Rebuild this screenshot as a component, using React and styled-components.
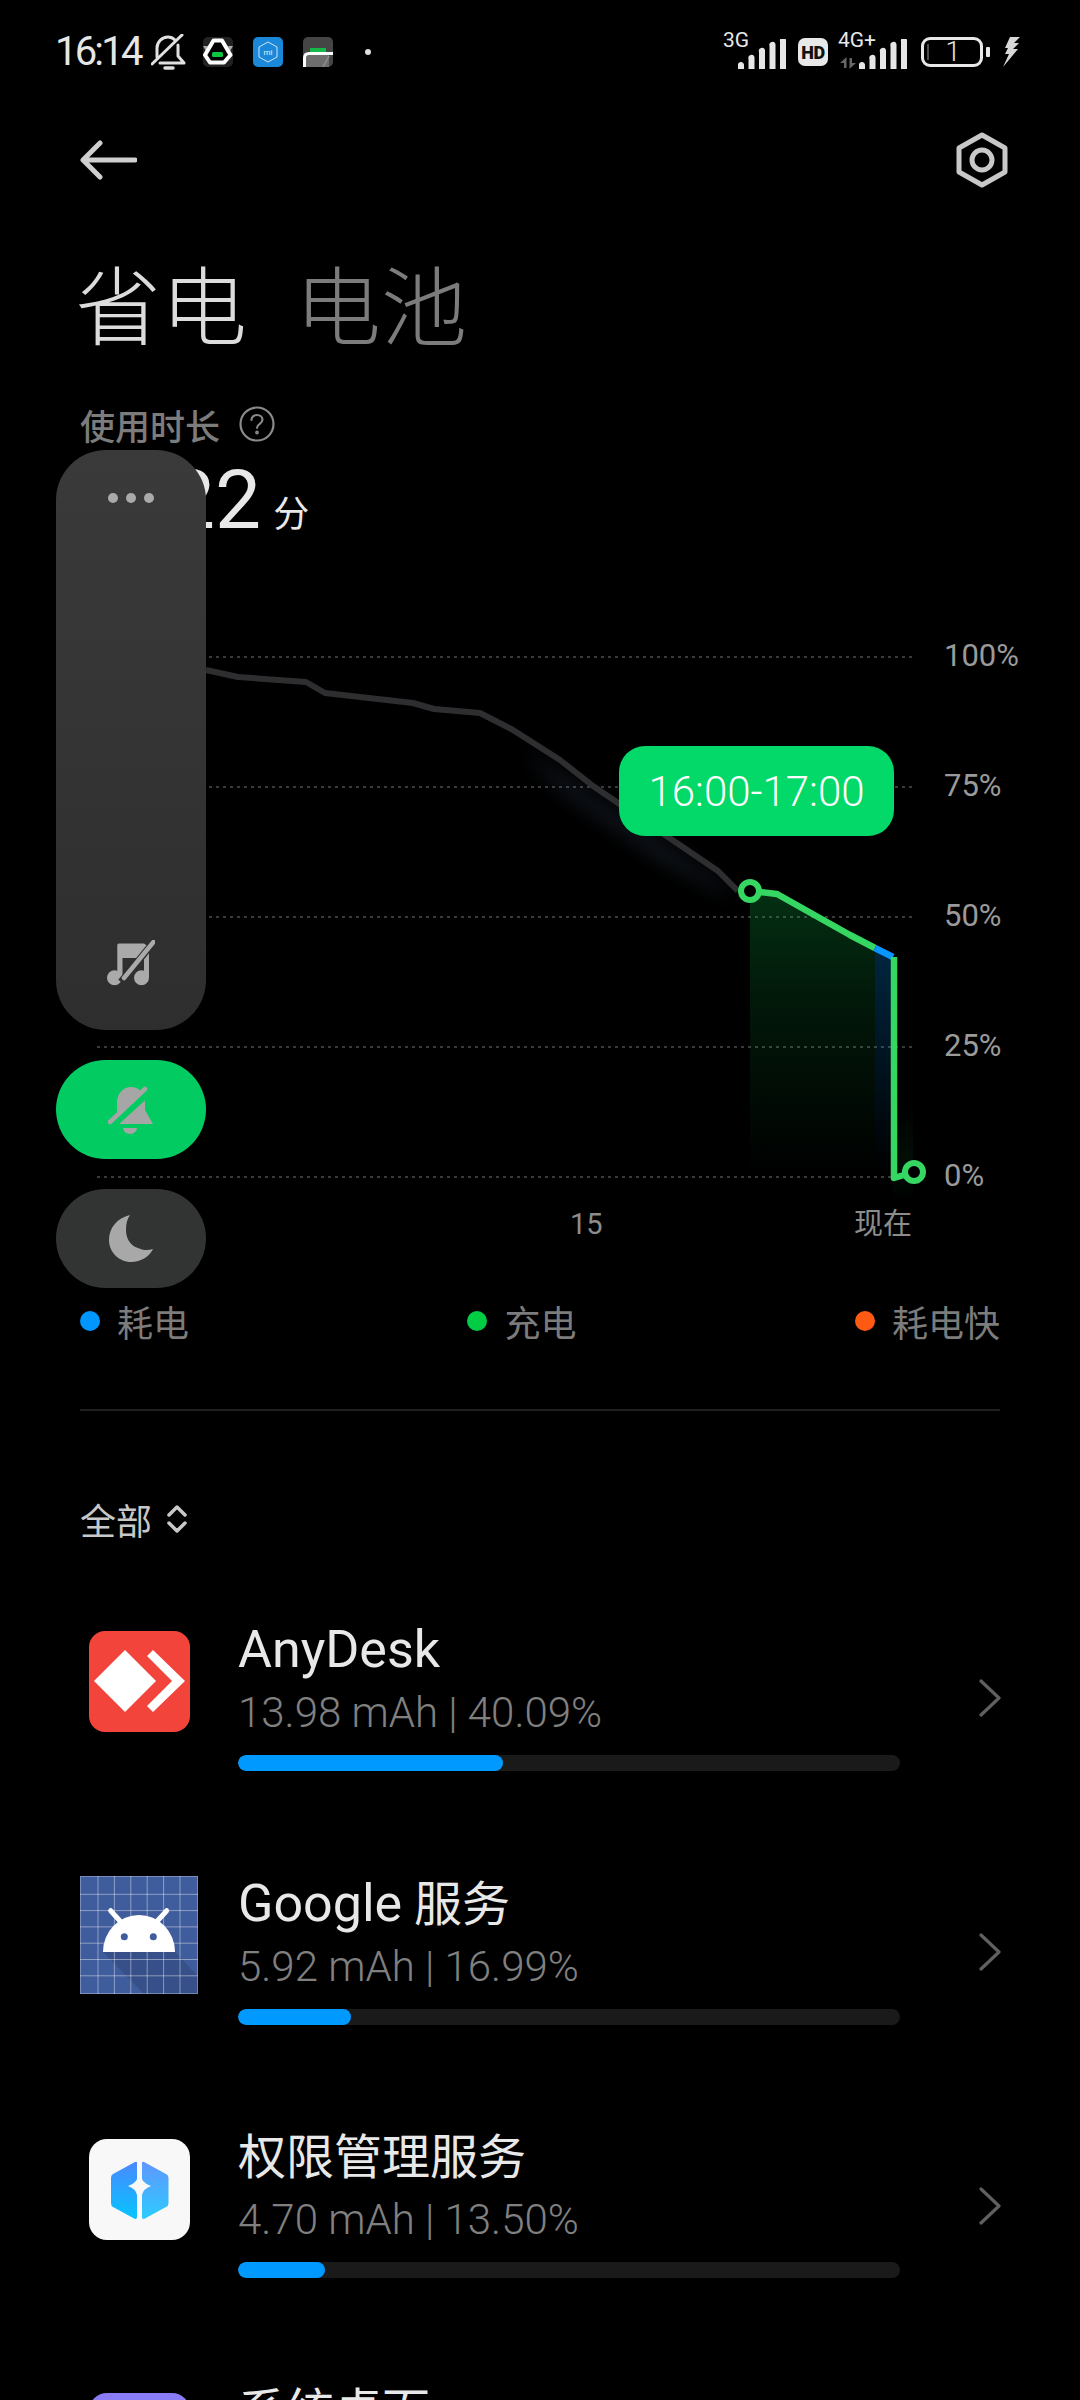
import React from "react";
import styled, { createGlobalStyle } from "styled-components";

const Global = createGlobalStyle`
  html, body { margin: 0; padding: 0; background: #000; }
  * { box-sizing: border-box; }
`;
const FONT = `Roboto, "Noto Sans CJK SC", sans-serif`;

const Page = styled.div`
  position: relative; width: 1080px; height: 2400px; overflow: hidden;
  background: #000; font-family: ${FONT}; color: #e8e8e8;
`;
const StatusBar = styled.header`
  height: 104px; padding: 0 60px 0 55px; display: flex; align-items: center; justify-content: space-between;
`;
const StatusGroup = styled.div`display: flex; align-items: center;`;
const Time = styled.span`
  width: 87px; font-size: 40px; line-height: 44px; letter-spacing: -2.8px; color: #e6e6e6; white-space: nowrap;
`;
const StatusIcon = styled.svg`display: block; flex: none; margin-left: ${p => p.$gap || 0}px;`;
const NotifDot = styled.i`
  width: 6px; height: 6px; border-radius: 50%; background: #ddd; margin-left: 32px; display: block;
`;
const Network = styled.div`
  position: relative; width: ${p => p.$w}px; height: 34px; display: flex; align-items: flex-end; justify-content: flex-end;
  margin-left: ${p => p.$gap || 0}px;
`;
const NetLabel = styled.span`
  position: absolute; left: 0; top: -5px; font-size: 21px; line-height: 21px; color: #e8e8e8; white-space: nowrap;
`;
const NetArrows = styled.svg`position: absolute; left: 2px; bottom: 0;`;
const HdBadge = styled.span`
  width: 30px; height: 28px; margin-left: 12px; border-radius: 7px; background: #e8e8e8; color: #111;
  font-size: 18px; font-weight: 900; display: flex; align-items: center; justify-content: center; letter-spacing: -.5px;
`;
const Battery = styled.div`
  width: 62px; height: 30px; margin-left: 14px; border: 3px solid #e8e8e8; border-radius: 9px;
  background: linear-gradient(#4a4a4a, #4a4a4a) 3px center / 2px 16px no-repeat;
  font-size: 27px; font-weight: 300; line-height: 24px; text-align: center; color: #e8e8e8; padding-left: 2px;
`;
const BatteryNub = styled.i`
  width: 4px; height: 10px; margin-left: 3px; border-radius: 1px; background: #e8e8e8; display: block;
`;

const Toolbar = styled.div`
  height: 112px; padding: 0 71px 0 80px; display: flex; align-items: center; justify-content: space-between;
`;
const Tabs = styled.div`
  height: 130px; margin-top: 29px; padding-left: 75px; display: flex; align-items: center; gap: 48px;
`;
const Tab = styled.span`
  font-size: 86px; line-height: 100px; font-weight: 200; color: ${p => (p.$active ? "#dcdcdc" : "#7c7c7c")};
`;
const UsageLabel = styled.div`
  height: 56px; margin-top: 21px; padding-left: 80px; display: flex; align-items: center; gap: 19px;
  font-size: 35px; font-weight: 500; color: #7c7c7c;
`;
const UsageValue = styled.div`
  height: 96px; padding-left: 169px; display: flex; align-items: center; gap: 12px; color: #e8e8e8;
`;
const Digits = styled.span`font-size: 82px; line-height: 96px; font-weight: 400;`;
const Unit = styled.span`font-size: 36px; line-height: 40px; margin-top: 30px;`;

const Chart = styled.section`position: relative; height: 610px; margin-top: 92px;`;
const ChartSvg = styled.svg`display: block;`;
const YLabel = styled.span`
  position: absolute; left: 944px; top: ${p => p.$y}px; font-size: 31px; line-height: 36px; color: #9a9a9a;
`;
const XLabel = styled.span`
  position: absolute; left: ${p => p.$x}px; top: 566px; font-size: 29px; line-height: 36px; color: #8c8c8c;
`;
const Tooltip = styled.div`
  position: absolute; left: 619px; top: 106px; width: 275px; height: 90px; border-radius: 26px;
  background: #02d968; color: #fff; font-size: 42px; display: flex; align-items: center; justify-content: center;
  font-weight: 300;
`;

const Legend = styled.div`
  height: 68px; margin-top: 37px; padding: 0 80px; display: flex; align-items: center; justify-content: space-between;
`;
const LegendItem = styled.div`
  display: flex; align-items: center; gap: 17px; font-size: 36px; color: #7c7c7c;
`;
const LegendDot = styled.i`
  width: 20px; height: 20px; border-radius: 50%; background: ${p => p.$c}; display: block;
`;
const Divider = styled.hr`
  height: 2px; margin: 54px 80px 0; border: 0; background: #1f1f1f;
`;
const Filter = styled.div`
  height: 58px; margin-top: 79px; padding-left: 80px; display: flex; align-items: center; gap: 15px;
  font-size: 36px; color: #c8c8c8;
`;
const List = styled.div`margin-top: 22px;`;
const Row = styled.div`
  height: 254px; padding: 50px 0 0 80px; display: flex; align-items: flex-start;
`;
const IconSlot = styled.div`
  width: 118px; height: 118px; margin-top: 2px; flex: none; display: flex; align-items: center; justify-content: center;
`;
const PurpleIcon = styled.div`
  width: 101px; height: 101px; border-radius: 18px; background: #8a7cf6;
`;
const RowText = styled.div`width: 662px; margin-left: 40px; flex: none;`;
const Name = styled.div`font-size: 48px; line-height: 60px; color: #e8e8e8; white-space: nowrap;`;
const Latin = styled.span`font-size: 52px;`;
const Sub = styled.div`
  margin-top: 7px; font-size: 42px; line-height: 50px; font-weight: 300; color: #808080; white-space: nowrap;
`;
const Track = styled.div`
  height: 16px; margin-top: 17px; border-radius: 8px; background: #1a1a1a; overflow: hidden;
`;
const Fill = styled.div`height: 100%; border-radius: 8px; background: #0099ff;`;
const Chevron = styled.svg`display: block; margin: 59px 0 0 79px; flex: none;`;

const SideDock = styled.aside`
  position: absolute; left: 56px; top: 450px; width: 150px; display: flex; flex-direction: column; gap: 30px;
`;
const Volume = styled.div`
  height: 580px; border-radius: 50px; background: linear-gradient(#3a3a3a, #2e2e2e);
  display: flex; flex-direction: column; align-items: center; justify-content: space-between; padding: 43px 0 44px;
`;
const Dots = styled.div`display: flex; gap: 8px;`;
const Dot = styled.i`width: 10px; height: 10px; border-radius: 50%; background: #aaa; display: block;`;
const DockButton = styled.div`
  height: 99px; border-radius: 50px; background: ${p => p.$c}; display: flex; align-items: center; justify-content: center;
`;

const Bars = ({ w = 48 }) => (
  <svg width={w} height="30" viewBox="0 0 48 30" style={{ display: "block" }}>
    <path d="M0 30v-3.5a3 3 0 0 1 6-1V30zM10.5 30V20a3 3 0 0 1 6 -2V30zM21 30V13a3 3 0 0 1 6-2V30zM31.500 30V7a3 3 0 0 1 6-2V30zM42 30V2.500a3 3 0 0 1 6-1.500V30z" fill="#e6e6e6" />
  </svg>
);

const GRID = [657, 787, 917, 1047, 1177];
const GREY = "206,670 238,677 306,682 325,693 413,703 434,709 480,713 513,730 560,760 593,786 718,871 738,891";

function Drawing() {
  return (
    <ChartSvg width="1080" height="610" viewBox="0 640 1080 610">
      <defs>
        <filter id="soft" x="-20%" y="-20%" width="140%" height="140%">
          <feGaussianBlur stdDeviation="10" />
        </filter>
        <linearGradient id="gf" x1="0" y1="891" x2="0" y2="1175" gradientUnits="userSpaceOnUse">
          <stop offset="0" stopColor="#0ec84f" stopOpacity=".24" />
          <stop offset=".35" stopColor="#0ec84f" stopOpacity=".13" />
          <stop offset="1" stopColor="#0ec84f" stopOpacity="0" />
        </linearGradient>
        <linearGradient id="gb" x1="0" y1="948" x2="0" y2="1175" gradientUnits="userSpaceOnUse">
          <stop offset="0" stopColor="#0099ff" stopOpacity=".25" />
          <stop offset="1" stopColor="#0099ff" stopOpacity="0" />
        </linearGradient>
        <linearGradient id="gt" x1="0" y1="1100" x2="0" y2="1200" gradientUnits="userSpaceOnUse">
          <stop offset="0" stopColor="#0ec84f" stopOpacity="0" />
          <stop offset=".7" stopColor="#0ec84f" stopOpacity=".08" />
          <stop offset="1" stopColor="#0ec84f" stopOpacity="0" />
        </linearGradient>
      </defs>
      {GRID.map(y => (
        <line key={y} x1="97" x2="913" y1={y} y2={y} stroke="#3a3a3a" strokeWidth="2" strokeDasharray="3 4" />
      ))}
      <polygon points="520,745 593,796 718,881 738,901 660,860 560,790" fill="#6f93c4" opacity=".16" filter="url(#soft)" />
      <polygon points="750,891 777,894 850,935 875,948 875,1175 750,1175" fill="url(#gf)" />
      <polygon points="875,948 893,957 893,1175 875,1175" fill="url(#gb)" />
      <rect x="893" y="1100" width="20" height="100" fill="url(#gt)" />
      <polyline points={GREY} fill="none" stroke="#2e2e31" strokeWidth="6" strokeLinejoin="round" />
      <polyline points="750,891 777,894 850,935 875,948" fill="none" stroke="#35d662" strokeWidth="6.500" strokeLinejoin="round" />
      <polyline points="875,948 893,957" fill="none" stroke="#0a96ff" strokeWidth="6.500" />
      <polyline points="894,957 894,1178 914,1172" fill="none" stroke="#35d662" strokeWidth="6.500" strokeLinejoin="round" />
      <circle cx="750" cy="891" r="9" fill="#000" stroke="#35d662" strokeWidth="6" />
      <circle cx="914" cy="1172" r="9" fill="#000" stroke="#35d662" strokeWidth="6" />
    </ChartSvg>
  );
}

const AnyDeskIcon = () => (
  <svg width="101" height="101" viewBox="0 0 101 101">
    <rect width="101" height="101" rx="16" fill="#f2443b" />
    <path d="M5 50 36 19 67 50 36 81Z" fill="#fff" />
    <path d="M64 19 96 50 64 81 58 75 83 50 58 25Z" fill="#fff" />
  </svg>
);
const AndroidIcon = () => {
  const lines = [0, 1, 2, 3, 4, 5];
  return (
    <svg width="118" height="118" viewBox="0 0 118 118">
      <rect width="118" height="118" fill="#3f5c9c" />
      <polygon points="23,76 95,76 118,100 118,118 64,118" fill="#000" opacity=".12" />
      {lines.map(i => (
        <g key={i} stroke="#fff" strokeOpacity=".42" strokeWidth="1">
          <line x1={18 + i * 16.4} x2={18 + i * 16.4} y1="0" y2="118" />
          <line y1={18.3 + i * 16.3} y2={18.3 + i * 16.3} x1="0" x2="118" />
        </g>
      ))}
      <rect x=".5" y=".5" width="117" height="117" fill="none" stroke="#fff" strokeOpacity=".3" />
      <path d="M30.700 34.700 40 45M86.700 34.700 77.300 45" stroke="#fff" strokeWidth="5" strokeLinecap="round" />
      <path d="M23 76a36 37 0 0 1 72 0Z" fill="#fff" />
      <circle cx="44.300" cy="60.700" r="3.500" fill="#3f5c9c" />
      <circle cx="73.300" cy="60.700" r="3.500" fill="#3f5c9c" />
    </svg>
  );
};
const PermissionIcon = () => (
  <svg width="101" height="101" viewBox="0 0 101 101">
    <defs>
      <linearGradient id="pl" x1="0" y1="0" x2="0" y2="1">
        <stop offset="0" stopColor="#4a88ff" />
        <stop offset="1" stopColor="#05c5ff" />
      </linearGradient>
      <linearGradient id="pr" x1="0" y1="0" x2="0" y2="1">
        <stop offset="0" stopColor="#5f97ff" />
        <stop offset="1" stopColor="#2dcbff" />
      </linearGradient>
    </defs>
    <rect width="101" height="101" rx="18" fill="#f8f8f8" />
    <path d="M46 23 24 35Q22 36 22 39V64Q22 67 24 68L46 80Q48 80.500 48 78V24Q48 22 46 23Z" fill="url(#pl)" />
    <path d="M55 23 77 35Q79.500 36 79.500 39V64Q79.500 67 77 68L55 80Q53 80.500 53 78V24Q53 22 55 23Z" fill="url(#pr)" />
    <path d="M50.500 33Q52 44 62 47Q54 50 53 56V82H48V56Q47 50 39 47Q49 44 50.500 33Z" fill="#f8f8f8" />
  </svg>
);

const apps = [
  { name: <Latin>AnyDesk</Latin>, sub: "13.98 mAh | 40.09%", pct: 40, icon: <AnyDeskIcon />, id: "a" },
  { name: <><Latin>Google</Latin> 服务</>, sub: "5.92 mAh | 16.99%", pct: 17, icon: <AndroidIcon />, id: "g" },
  { name: "权限管理服务", sub: "4.70 mAh | 13.50%", pct: 13.2, icon: <PermissionIcon />, id: "p" },
  { name: "系统桌面", sub: "3.10 mAh | 8.90%", pct: 9, icon: <PurpleIcon />, id: "s" },
];

export default function App() {
  return (
    <Page>
      <Global />
      <StatusBar>
        <StatusGroup>
          <Time>16:14</Time>
          <StatusIcon $gap={9} width="35" height="36" viewBox="0 0 35 36" fill="none" stroke="#e0e0e0" strokeWidth="3" strokeLinecap="round" strokeLinejoin="round">
            <path d="M1 30 31 1" />
            <path d="M6 23V14C6 8 11 3 17 3c3 0 5 1 7 3" />
            <path d="M27 11v11l6 7H9" />
            <path d="M14 34h8" strokeWidth="3.500" />
          </StatusIcon>
          <StatusIcon $gap={17} width="30" height="30" viewBox="0 0 30 30">
            <rect width="30" height="30" rx="5" fill="#222" />
            <path d="M0 9H5L3 14ZM30 9H25L27 14Z" fill="#aaa" />
            <path d="M10.500 3.500H19L27.500 18 21 25.500H7L2 18Z" fill="#000" stroke="#fff" strokeWidth="4" strokeLinejoin="round" />
            <rect x="9" y="15" width="11" height="5" rx="1.500" fill="#0ec63f" />
          </StatusIcon>
          <StatusIcon $gap={20} width="30" height="30" viewBox="0 0 30 30">
            <rect width="30" height="30" rx="5" fill="#1a87d8" />
            <path d="M15 5 24 10V20L15 25 6 20V10Z" fill="none" stroke="#cfe6f8" strokeWidth="1" />
            <text x="15" y="18" fontSize="8" fontFamily="Roboto" textAnchor="middle" fill="#e6f3fc">mi</text>
          </StatusIcon>
          <StatusIcon $gap={20} width="30" height="30" viewBox="0 0 30 30">
            <rect width="30" height="30" rx="5" fill="#454545" />
            <rect x="7" y="11" width="16" height="4" fill="#17b84a" />
            <path d="M3 17H26V30H3Z" fill="#6e6e6e" />
            <path d="M19 30 25 19H27L21 30Z" fill="#8a8a8a" />
            <path d="M30 16.500H6Q1.500 16.500 1.500 21V30" fill="none" stroke="#fff" strokeWidth="3" />
          </StatusIcon>
          <NotifDot />
        </StatusGroup>
        <StatusGroup>
          <Network $w={63}>
            <NetLabel>3G</NetLabel>
            <Bars />
          </Network>
          <HdBadge>HD</HdBadge>
          <Network $w={69} $gap={10}>
            <NetLabel>4G+</NetLabel>
            <NetArrows width="16" height="12" viewBox="0 0 16 12">
              <path d="M6.500 0V11H4V6H0ZM9.500 12V1H12V6H16Z" fill="#666" />
            </NetArrows>
            <Bars />
          </Network>
          <Battery>1</Battery>
          <BatteryNub />
          <StatusIcon $gap={13} width="17" height="30" viewBox="0 0 17 30">
            <path d="M7 0H17L11 6H16L10 12H15L0 30 6 17H2L5 11H2Z" fill="#d8d8d8" />
          </StatusIcon>
        </StatusGroup>
      </StatusBar>

      <Toolbar>
        <svg width="57" height="40" viewBox="0 0 57 40" fill="none" stroke="#cfcfcf" strokeWidth="5" strokeLinecap="round" strokeLinejoin="round">
          <path d="M55 20H4M20 3 3 20 20 37" />
        </svg>
        <svg width="54" height="56" viewBox="0 0 54 56" fill="none" stroke="#c8c8c8" strokeWidth="5" strokeLinejoin="round">
          <path d="M27 3 50 16V40L27 53 4 40V16Z" />
          <circle cx="27" cy="28" r="10" />
        </svg>
      </Toolbar>

      <Tabs>
        <Tab $active>省电</Tab>
        <Tab>电池</Tab>
      </Tabs>
      <UsageLabel>
        使用时长
        <svg width="36" height="36" viewBox="0 0 36 36" fill="none" stroke="#8a8a8a" strokeWidth="2.200" strokeLinecap="round">
          <circle cx="18" cy="18" r="16.500" />
          <path d="M12.500 14c0-3 2.500-5 5.500-5s5.500 2 5.500 4.800c0 4-5.500 4-5.500 8" />
          <circle cx="18" cy="26.500" r=".8" />
        </svg>
      </UsageLabel>
      <UsageValue>
        <Digits>22</Digits>
        <Unit>分</Unit>
      </UsageValue>

      <Chart>
        <Drawing />
        {["100%", "75%", "50%", "25%", "0%"].map((t, i) => (
          <YLabel key={t} $y={[-2, 128, 258, 388, 518][i]}>{t}</YLabel>
        ))}
        <XLabel $x={570}>15</XLabel>
        <XLabel $x={854}>现在</XLabel>
        <Tooltip>16:00-17:00</Tooltip>
      </Chart>

      <Legend>
        <LegendItem><LegendDot $c="#0096ff" />耗电</LegendItem>
        <LegendItem><LegendDot $c="#00cc44" />充电</LegendItem>
        <LegendItem><LegendDot $c="#ff5a14" />耗电快</LegendItem>
      </Legend>
      <Divider />
      <Filter>
        全部
        <svg width="20" height="28" viewBox="0 0 20 28" fill="none" stroke="#c8c8c8" strokeWidth="3.500" strokeLinecap="round" strokeLinejoin="round">
          <path d="M2 10 10 2 18 10M2 18 10 26 18 18" />
        </svg>
      </Filter>

      <List>
        {apps.map(a => (
          <Row key={a.id}>
            <IconSlot>{a.icon}</IconSlot>
            <RowText>
              <Name>{a.name}</Name>
              <Sub>{a.sub}</Sub>
              <Track><Fill style={{ width: `${a.pct}%` }} /></Track>
            </RowText>
            <Chevron width="22" height="38" viewBox="0 0 22 38" fill="none" stroke="#606060" strokeWidth="3.200" strokeLinecap="round" strokeLinejoin="round">
              <path d="M2 2 20 19 2 36" />
            </Chevron>
          </Row>
        ))}
      </List>

      <SideDock>
        <Volume>
          <Dots><Dot /><Dot /><Dot /></Dots>
          <svg width="48" height="46" viewBox="0 0 48 46">
            <path d="M12 3.500H37L42 7V38H37V18H15.500V38H10.300V5Q10.300 3.500 12 3.500Z" fill="#aaa" />
            <circle cx="7.500" cy="37.800" r="7.500" fill="#aaa" />
            <circle cx="34.500" cy="37.800" r="7.500" fill="#aaa" />
            <path d="M50 -2 14 42" stroke="#303030" strokeWidth="7" />
            <path d="M46.500 2 17 38" stroke="#aaa" strokeWidth="4.500" strokeLinecap="round" />
          </svg>
        </Volume>
        <DockButton $c="#02cb62">
          <svg width="46" height="48" viewBox="0 0 46 48">
            <path d="M9 16a14 15 0 0 1 28 0V24L45 38H3L9 30Z" fill="#a6a6a6" />
            <path d="M15 42h14a7 6 0 0 1-14 0z" fill="#a6a6a6" />
            <path d="M-2 44 46 0" stroke="#02cb62" strokeWidth="9" />
            <path d="M2 36 37 3" stroke="#a6a6a6" strokeWidth="4.500" strokeLinecap="round" />
          </svg>
        </DockButton>
        <DockButton $c="#323333">
          <svg width="44" height="47" viewBox="0 0 44 47">
            <path d="M21 0C8 3 0 13 0 25 0 37 10 47 22 47 32 47 41 41 44 34 38 36 33 35 29 33 20 30 17 22 17 15 17 9 18 4 21 0Z" fill="#a8a8a8" />
          </svg>
        </DockButton>
      </SideDock>
    </Page>
  );
}
